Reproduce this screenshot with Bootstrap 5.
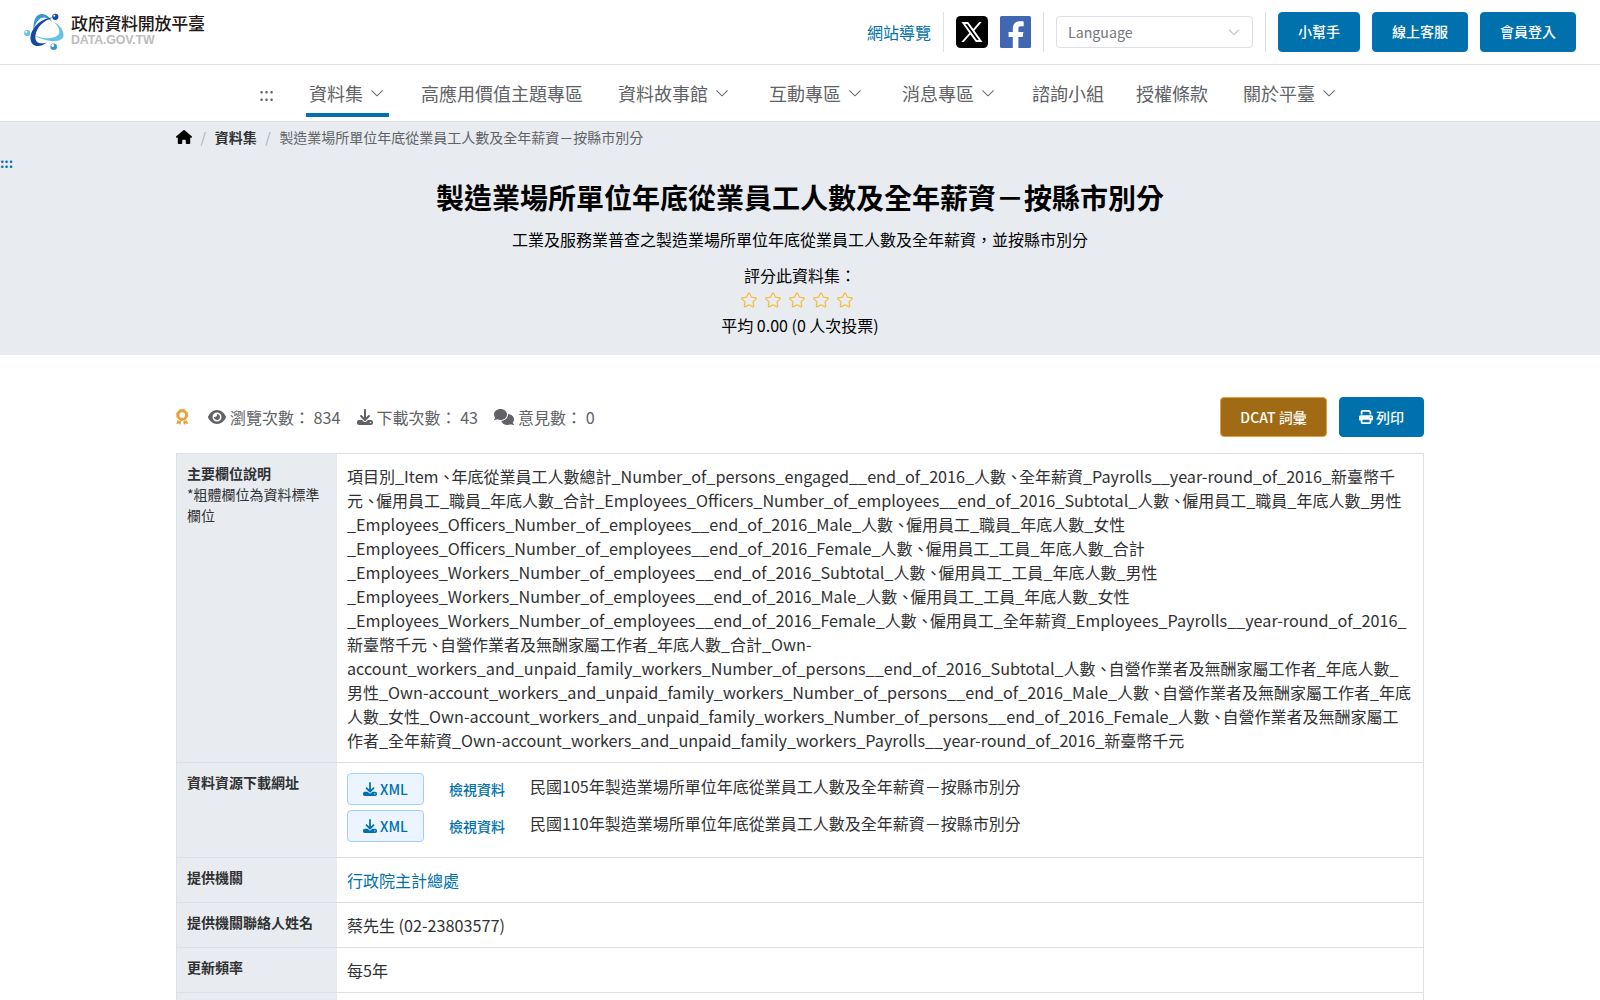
<!DOCTYPE html>
<html lang="zh-Hant-TW">
<head>
<meta charset="utf-8">
<meta name="viewport" content="width=device-width, initial-scale=1">
<title>製造業場所單位年底從業員工人數及全年薪資－按縣市別分 | 政府資料開放平臺</title>
<link href="https://cdn.jsdelivr.net/npm/bootstrap@5.3.0/dist/css/bootstrap.min.css" rel="stylesheet">
<style>
:root{--brand:#0071ac;--line:#dcdfe6;--pale:#e8ecf1}
body{font-family:"Noto Sans CJK TC",sans-serif;font-size:16px;line-height:24px;color:#303133;overflow:hidden;height:1000px}
a{color:var(--brand);text-decoration:none}
svg{display:block;fill:currentColor;flex:none}
/* header */
.topbar{height:65px;border-bottom:1px solid var(--line);padding:0 24px 1px}
.logo-text{margin-left:7px;padding-bottom:3px}
.brand-name{font-size:17px;line-height:20px;font-weight:500;color:#231815;letter-spacing:-.3px}
.brand-sub{font-family:"Liberation Sans",sans-serif;font-weight:700;font-size:12.4px;line-height:14px;color:#bdbdbd;letter-spacing:-.15px}
.vline{width:1px;height:40px;background:var(--line);margin:0 12px}
.lang-box{width:197px;height:32px;border:1px solid var(--line);border-radius:4px;padding:0 11px;font-size:14.2px;color:#73767a}
.btn-site{--bs-btn-color:#fff;--bs-btn-bg:var(--brand);--bs-btn-border-color:var(--brand);--bs-btn-hover-color:#fff;--bs-btn-hover-bg:#005f91;height:40px;padding:0 19px;font-size:14px;font-weight:500;border-radius:4px;display:inline-flex;align-items:center}
.btn-dcat{--bs-btn-bg:#a16a15;--bs-btn-border-color:#e6a23c;width:107px;justify-content:center}
/* main menu */
.menu{height:57px;border-bottom:1px solid var(--line);padding-left:243px;font-size:18px;color:#606266}
.menu a{color:inherit;height:52px;display:flex;align-items:center;padding:8px 3px 0;margin:0 13px;border-bottom:4px solid transparent;white-space:nowrap}
.menu a.has-sub{margin:0 16px}
.menu a.current{border-color:var(--brand)}
.menu svg{margin:-1px 1px 0 6px}
/* title block */
.hero{background:var(--pale);height:233px;color:#000}
.wrap{width:1248px;margin:0 auto}
.crumbs{font-size:14px;line-height:20px;padding-top:5px;color:#606266}
.crumbs svg{color:#000;margin-top:3px}
.crumbs b{font-weight:700;color:#303133}
.crumbs i{color:#a8abb2;font-style:normal;margin:0 8.6px}
.skip{display:block;height:25px;padding-top:3px;font-size:13.4px;font-weight:700}
.hero h1{font-size:28px;line-height:40px;font-weight:700;margin:5px 0 10px}
.rate-label{margin-top:12px}
.rate svg{margin-right:6px;color:#f7ba2a}
/* statistics */
.stats{color:#606266;padding:42px 0 16px}
.medal{color:#e6a23c;margin-right:19px}
/* details */
.info{border:1px solid var(--line);border-bottom:0}
.info-row{display:flex;border-bottom:1px solid var(--line)}
.info-key{width:160px;flex:none;background:var(--pale);padding:9px 10px 10px;font-size:14px;line-height:21px}
.info-key b{font-weight:700;display:block}
.info-val{padding:10px;flex:1;min-width:0}
.latin{font-size:16.18px;line-height:1}
.comma{letter-spacing:-3.1px}
.file{height:37px}
.file-btn{width:77px;height:32px;border:1px solid #a0cfff;border-radius:4px;background:#ecf5ff;font-size:14px;font-weight:500}
.file-link{font-size:14px;font-weight:500;padding:4px 25px 0}
.file-name{padding-top:1px}
</style>
</head>
<body>
<svg width="0" height="0" class="position-absolute">
<symbol id="chev" viewBox="0 0 1024 1024"><path d="M831.9 340.9 512 652.700 192.100 340.900a30.600 30.600 0 0 0-42.700 0 29.100 29.100 0 0 0 0 41.600L489.700 714.200a32 32 0 0 0 44.600 0l340.300-331.700a29.100 29.100 0 0 0 0-41.700 30.600 30.600 0 0 0-42.700 0z"/></symbol>
<symbol id="star" viewBox="0 0 1024 1024"><path d="M512 747.800l228.200 119.900a6.400 6.400 0 0 0 9.300-6.700l-43.600-254 184.600-179.900a6.400 6.400 0 0 0-3.500-10.900l-255.100-37.100L517.800 147.900a6.400 6.400 0 0 0-11.500 0L392.200 379.100l-255.100 37a6.400 6.400 0 0 0-3.600 10.900L318 607l-43.600 254a6.400 6.400 0 0 0 9.300 6.800L512 747.800zM313.600 924.500a70.400 70.400 0 0 1-102.100-74.200l37.900-221-160.600-156.500a70.400 70.400 0 0 1 39-120.100l222-32.300 99.300-201.100a70.400 70.400 0 0 1 126.200 0l99.300 201.100 222 32.300a70.400 70.400 0 0 1 39 120.100L774.900 629.400l37.900 221a70.400 70.400 0 0 1-102.100 74.100L512 820.100 313.600 924.500z"/></symbol>
<symbol id="dl" viewBox="0 0 512 512"><path d="M288 32c0-17.700-14.300-32-32-32s-32 14.300-32 32v242.700l-73.400-73.400c-12.500-12.500-32.800-12.500-45.300 0s-12.500 32.800 0 45.300l128 128c12.500 12.500 32.800 12.500 45.300 0l128-128c12.500-12.500 12.500-32.800 0-45.300s-32.800-12.500-45.300 0L288 274.700V32zM64 352c-35.300 0-64 28.700-64 64v32c0 35.300 28.700 64 64 64h384c35.300 0 64-28.700 64-64v-32c0-35.300-28.700-64-64-64H346.500l-45.300 45.300c-25 25-65.500 25-90.500 0L165.500 352H64zm368 56a24 24 0 1 1 0 48 24 24 0 1 1 0-48z"/></symbol>
</svg>
<header class="topbar d-flex align-items-center">
  <a class="d-flex align-items-center" href="#">
    <svg width="40" height="38" viewBox="0 0 40 38">
      <path d="M9.500 16C9 6 13 1 18 1c5 0 8 4 10 8-3-3-5.500-4.500-8.500-4.500-4 0-7 4-10 11.500z" fill="#3498d4"/>
      <path d="M9 22c9 4 20 4.500 25 0 3-3 1-8-4-13 6 3 10 9 9.500 14C38 30 24 30 9 22z" fill="#63c3e5"/>
      <path d="M29 4.500C19 8 13 14 11.500 22c-1 7 3 10 11.500 7.500-8 6-16 4-16.500-3.500C6 17 15 5.500 29 4.500z" fill="#17479e"/>
      <circle cx="31.300" cy="3.800" r="3.100" fill="#17479e"/><circle cx="30.300" cy="2.800" r="1" fill="#fff"/>
      <circle cx="3.200" cy="20" r="3.100" fill="#63c3e5"/><circle cx="2.300" cy="19" r="1.100" fill="#fff"/>
      <circle cx="29.700" cy="33.700" r="3.300" fill="#3498d4"/><circle cx="28.700" cy="32.500" r="1.400" fill="#fff"/>
    </svg>
    <span class="logo-text d-flex flex-column"><span class="brand-name">政府資料開放平臺</span><span class="brand-sub">DATA.GOV.TW</span></span>
  </a>
  <a class="ms-auto" href="#">網站導覽</a>
  <span class="vline"></span>
  <a href="#" class="me-2"><svg width="32" height="32" viewBox="0 0 32 32"><rect width="32" height="32" rx="4.500" fill="#000"/><path d="M5.500 6h6.700l5.100 6.900L23.200 6h2.500l-7.300 8.500L26.500 26h-6.700l-5.500-7.500L7.800 26H5.300l8-9.100zm3.700 1.900L20.800 24h2L11.300 7.900z" fill="#fff"/></svg></a>
  <a href="#" class="ms-1"><svg width="31" height="32" viewBox="0 0 31 32"><rect width="31" height="32" rx="1.500" fill="#4267b2"/><path fill="#fff" d="M12.800 32V21H8.600v-5h4.200v-3.500c0-4.800 2.700-7.200 6.700-7.200 2 0 3.800.2 4.200.3v4.600h-2.700c-2.100 0-2.600 1-2.600 2.600V16h5l-.7 5h-4.300v11z"/></svg></a>
  <span class="vline"></span>
  <div class="lang-box d-flex align-items-center justify-content-between">Language<svg width="14" height="14" color="#a8abb2"><use href="#chev"/></svg></div>
  <span class="vline"></span>
  <div class="d-flex gap-1"><a class="btn btn-site me-2" href="#">小幫手</a><a class="btn btn-site me-2" href="#">線上客服</a><a class="btn btn-site" href="#">會員登入</a></div>
</header>
<nav class="menu d-flex">
  <a href="#">:::</a>
  <a href="#" class="has-sub current">資料集<svg width="16" height="16"><use href="#chev"/></svg></a>
  <a href="#">高應用價值主題專區</a>
  <a href="#" class="has-sub">資料故事館<svg width="16" height="16"><use href="#chev"/></svg></a>
  <a href="#" class="has-sub">互動專區<svg width="16" height="16"><use href="#chev"/></svg></a>
  <a href="#" class="has-sub">消息專區<svg width="16" height="16"><use href="#chev"/></svg></a>
  <a href="#">諮詢小組</a>
  <a href="#">授權條款</a>
  <a href="#" class="has-sub">關於平臺<svg width="16" height="16"><use href="#chev"/></svg></a>
</nav>
<section class="hero">
  <div class="wrap crumbs d-flex">
    <svg width="16" height="14" viewBox="0 0 576 512" preserveAspectRatio="none"><path d="M575.8 255.500c0 18-15 32.100-32 32.100h-32l.7 160.200V472c0 22.100-17.900 40-40 40H392c-22.100 0-40-17.900-40-40v-88c0-17.700-14.300-32-32-32h-64c-17.700 0-32 14.300-32 32v88c0 22.100-17.900 40-40 40h-80c-22.100 0-40-17.900-40-40V287.600H32c-18 0-32-14-32-32.100 0-9 3-17 10-24L266.400 8c7-7 15-8 22-8s15 2 21 7l255.400 224.500c8 7 12 15 11 24z"/></svg>
    <i>/</i><b>資料集</b><i>/</i>製造業場所單位年底從業員工人數及全年薪資－按縣市別分
  </div>
  <a class="skip" href="#">:::</a>
  <div class="text-center">
    <h1>製造業場所單位年底從業員工人數及全年薪資－按縣市別分</h1>
    <div>工業及服務業普查之製造業場所單位年底從業員工人數及全年薪資，並按縣市別分</div>
    <div class="rate-label">評分此資料集：</div>
    <div class="rate d-flex justify-content-center align-items-center py-1">
      <svg width="18" height="18"><use href="#star"/></svg><svg width="18" height="18"><use href="#star"/></svg><svg width="18" height="18"><use href="#star"/></svg><svg width="18" height="18"><use href="#star"/></svg><svg width="18" height="18"><use href="#star"/></svg>
    </div>
    <div>平均 0.00 (0 人次投票)</div>
  </div>
</section>
<main class="wrap">
  <div class="stats d-flex align-items-center">
    <svg class="medal" width="13" height="16" viewBox="0 0 13 16"><circle cx="6.200" cy="6" r="4.300" fill="none" stroke="currentColor" stroke-width="2.900"/><circle cx="6.200" cy="6" r="5.600" fill="none" stroke="currentColor" stroke-width="1" stroke-dasharray="2.400 2"/><path d="M1.500 11.300l3.800 1.200-1 3.400L3 14.600l-2.700.3zM10.900 11.300l-3.800 1.200 1 3.400 1.300-1.300 2.700.3z"/></svg>
    <svg class="me-1" width="18" height="16" viewBox="0 0 576 512"><path d="M288 32c-80.800 0-145.500 36.800-192.600 80.600C48.600 156 17.300 208 2.500 243.700c-3.300 7.900-3.300 16.700 0 24.600C17.300 304 48.600 356 95.400 399.400 142.500 443.200 207.200 480 288 480s145.500-36.800 192.600-80.600c46.800-43.500 78.100-95.400 93-131.100 3.300-7.900 3.300-16.700 0-24.600-14.900-35.700-46.200-87.700-93-131.100C433.500 68.800 368.800 32 288 32zM144 256a144 144 0 1 1 288 0 144 144 0 1 1-288 0zm144-64c0 35.300-28.700 64-64 64-7.100 0-13.900-1.200-20.300-3.300-5.500-1.800-11.900 1.600-11.700 7.400.3 6.900 1.300 13.800 3.200 20.700 13.700 51.200 66.400 81.600 117.600 67.900s81.600-66.400 67.900-117.600c-11.100-41.500-47.800-69.400-88.600-71.100-5.800-.2-9.200 6.100-7.400 11.700 2.100 6.400 3.300 13.200 3.300 20.300z"/></svg>
    <span class="me-3">瀏覽次數： <span class="latin">834</span></span>
    <svg class="me-1" width="16" height="16"><use href="#dl"/></svg>
    <span class="me-3">下載次數： <span class="latin">43</span></span>
    <svg class="me-1" width="20" height="16" viewBox="0 0 640 512"><path d="M208 352c114.900 0 208-78.800 208-176S322.900 0 208 0 0 78.800 0 176c0 38.600 14.700 74.300 39.600 103.400-3.500 9.400-8.700 17.700-14.200 24.700-4.800 6.200-9.700 11-13.300 14.300-1.800 1.600-3.300 2.900-4.300 3.700l-1.300 1C1 327.200-1.400 334.400.8 340.900S9.100 352 16 352c21.800 0 43.800-5.600 62.100-12.500 9.200-3.500 17.800-7.400 25.200-11.400C134.100 343.300 169.800 352 208 352zM448 176c0 112.300-99.100 196.900-216.500 207C255.800 457.400 336.400 512 432 512c38.200 0 73.900-8.700 104.700-23.900 7.500 4 16 7.900 25.200 11.400 18.300 6.900 40.300 12.500 62.100 12.500 6.900 0 13.100-4.500 15.200-11.100s-.2-13.800-5.800-17.900l-1.300-1c-1-.8-2.500-2-4.300-3.700-3.600-3.300-8.500-8.100-13.300-14.300-5.500-7-10.700-15.400-14.200-24.700 24.900-29 39.600-64.700 39.600-103.400 0-92.800-84.900-168.900-192.600-175.500.4 5.100.6 10.300.6 15.500z"/></svg>
    <span>意見數： <span class="latin">0</span></span>
    <a class="btn btn-site btn-dcat ms-auto me-2" href="#">DCAT 詞彙</a>
    <a class="btn btn-site ms-1" href="#"><svg width="14" height="14" viewBox="0 0 512 512" style="margin-right:3px"><path d="M128 0C92.700 0 64 28.700 64 64v96h64V64h226.700L384 93.300V160h64V93.300c0-17-6.700-33.300-18.700-45.300L400 18.700C388 6.700 371.700 0 354.700 0H128zm256 352v96H128v-96h256zm64 32h32c17.700 0 32-14.300 32-32v-96c0-35.300-28.700-64-64-64H64c-35.300 0-64 28.700-64 64v96c0 17.700 14.300 32 32 32h32v64c0 35.300 28.700 64 64 64h256c35.300 0 64-28.700 64-64v-64zM432 248a24 24 0 1 1 0 48 24 24 0 1 1 0-48z"/></svg>列印</a>
  </div>
  <div class="info">
    <div class="info-row"><div class="info-key"><b>主要欄位說明</b>*粗體欄位為資料標準欄位</div><div class="info-val" id="fields"></div></div>
    <div class="info-row"><div class="info-key"><b>資料資源下載網址</b></div><div class="info-val">
      <div class="file d-flex align-items-start"><a class="file-btn d-flex align-items-center justify-content-center" href="#"><svg width="14" height="14" style="margin-right:3px"><use href="#dl"/></svg>XML</a><a class="file-link" href="#">檢視資料</a><span class="file-name">民國105年製造業場所單位年底從業員工人數及全年薪資－按縣市別分</span></div>
      <div class="file d-flex align-items-start"><a class="file-btn d-flex align-items-center justify-content-center" href="#"><svg width="14" height="14" style="margin-right:3px"><use href="#dl"/></svg>XML</a><a class="file-link" href="#">檢視資料</a><span class="file-name">民國110年製造業場所單位年底從業員工人數及全年薪資－按縣市別分</span></div>
    </div></div>
    <div class="info-row"><div class="info-key"><b>提供機關</b></div><div class="info-val"><a href="#">行政院主計總處</a></div></div>
    <div class="info-row"><div class="info-key"><b>提供機關聯絡人姓名</b></div><div class="info-val">蔡先生 <span class="latin">(02-23803577)</span></div></div>
    <div class="info-row"><div class="info-key"><b>更新頻率</b></div><div class="info-val">每5年</div></div>
    <div class="info-row"><div class="info-key">&nbsp;</div><div class="info-val"></div></div>
  </div>
</main>
<script>
const fields = [
  '項目別_Item',
  '年底從業員工人數總計_Number_of_persons_engaged__end_of_2016_人數',
  '全年薪資_Payrolls__year-round_of_2016_新臺幣千元',
  '僱用員工_職員_年底人數_合計_Employees_Officers_Number_of_employees__end_of_2016_Subtotal_人數',
  '僱用員工_職員_年底人數_男性_Employees_Officers_Number_of_employees__end_of_2016_Male_人數',
  '僱用員工_職員_年底人數_女性_Employees_Officers_Number_of_employees__end_of_2016_Female_人數',
  '僱用員工_工員_年底人數_合計_Employees_Workers_Number_of_employees__end_of_2016_Subtotal_人數',
  '僱用員工_工員_年底人數_男性_Employees_Workers_Number_of_employees__end_of_2016_Male_人數',
  '僱用員工_工員_年底人數_女性_Employees_Workers_Number_of_employees__end_of_2016_Female_人數',
  '僱用員工_全年薪資_Employees_Payrolls__year-round_of_2016_新臺幣千元',
  '自營作業者及無酬家屬工作者_年底人數_合計_Own-account_workers_and_unpaid_family_workers_Number_of_persons__end_of_2016_Subtotal_人數',
  '自營作業者及無酬家屬工作者_年底人數_男性_Own-account_workers_and_unpaid_family_workers_Number_of_persons__end_of_2016_Male_人數',
  '自營作業者及無酬家屬工作者_年底人數_女性_Own-account_workers_and_unpaid_family_workers_Number_of_persons__end_of_2016_Female_人數',
  '自營作業者及無酬家屬工作者_全年薪資_Own-account_workers_and_unpaid_family_workers_Payrolls__year-round_of_2016_新臺幣千元'
];
document.getElementById('fields').innerHTML = fields
  .map(f => f.replace(/[\x21-\x7e]+/g, '<span class="latin">$&</span>'))
  .join('<span class="comma">、</span>');
</script>
<script src="https://cdn.jsdelivr.net/npm/bootstrap@5.3.0/dist/js/bootstrap.bundle.min.js"></script>
</body>
</html>
